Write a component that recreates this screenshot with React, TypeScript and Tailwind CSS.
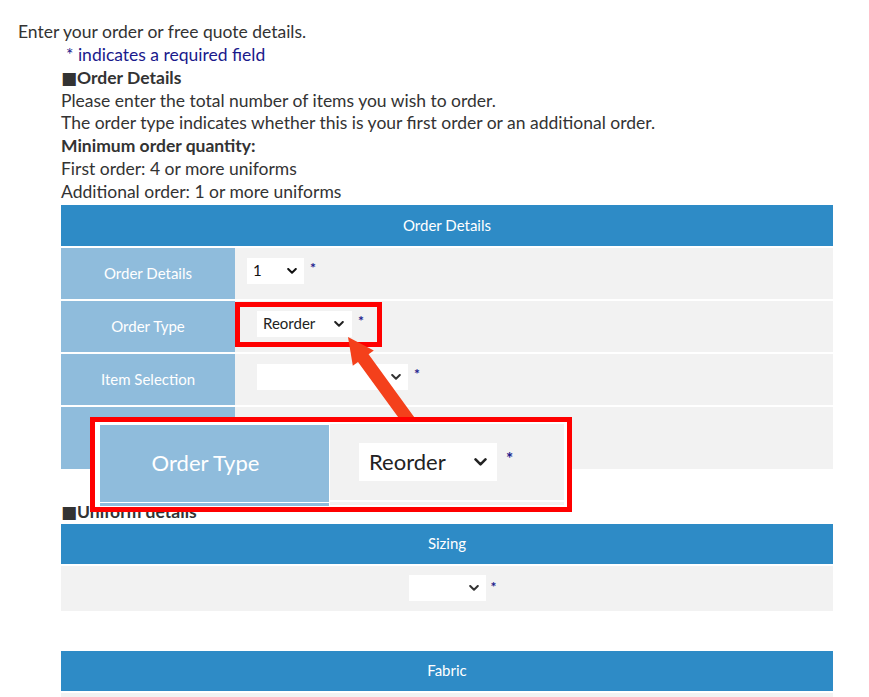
import React from 'react';

const Chevron = ({ className = '' }: { className?: string }) => (
  <svg viewBox="0 0 10 6" className={className} fill="none" stroke="currentColor" strokeWidth="2" strokeLinecap="round" strokeLinejoin="round">
    <path d="M1.2 1l3.8 3.8L8.8 1" />
  </svg>
);

const Req = ({ className = '' }: { className?: string }) => (
  <span className={`text-[#1a1a8c] text-[14px] font-bold leading-none ${className}`}>*</span>
);

const Square = () => (
  <span className="font-['DejaVu_Sans',sans-serif] text-[17px] font-normal leading-none">■</span>
);

const Row = ({ label, children, className = 'h-[53px]' }: { label: string; children?: React.ReactNode; className?: string }) => (
  <div className={`flex border-t-2 border-white ${className}`}>
    <div className="w-[174px] bg-[#8fbcdc] text-white text-[15px] flex items-center justify-center">{label}</div>
    <div className="flex-1 bg-[#f2f2f2] flex items-center pb-[5px]">{children}</div>
  </div>
);

const Header = ({ title, className = 'h-[41px]' }: { title: string; className?: string }) => (
  <div className={`bg-[#2e8bc6] text-white text-[15px] flex items-center justify-center ${className}`}>{title}</div>
);

export default function App() {
  return (
    <div className="relative w-[869px] h-[697px] overflow-hidden bg-white text-[#333] font-['Lato','Noto_Sans',sans-serif] text-[17.5px] leading-[22.86px]">
      <div className="pt-[21px] pl-[18px] pr-[36px]">
        <p>Enter your order or free quote details.</p>
        <div className="pl-[43px]">
          <p className="pl-[5px] text-[#1a1a8c]">* indicates a required field</p>
          <p className="font-bold h-[22.86px]"><Square />Order Details</p>
          <p>Please enter the total number of items you wish to order.</p>
          <p>The order type indicates whether this is your first order or an additional order.</p>
          <p className="font-bold">Minimum order quantity:</p>
          <p>First order: 4 or more uniforms</p>
          <p>Additional order: 1 or more uniforms</p>

          <div className="mt-[1px]">
            <Header title="Order Details" />
            <Row label="Order Details">
              <span className="ml-[12px] inline-flex items-center justify-between bg-white w-[57px] h-[26px] pl-[6px] pr-[7px] text-[15px] text-[#111]">
                1<Chevron className="w-[10px] h-[6px]" />
              </span>
              <Req className="ml-[6px] -mt-[6px]" />
            </Row>
            <Row label="Order Type">
              <span className="ml-[22px] inline-flex items-center justify-between bg-white w-[95px] h-[26px] pl-[6px] pr-[8px] text-[15px] text-[#222]">
                Reorder<Chevron className="w-[10px] h-[6px]" />
              </span>
              <Req className="ml-[6px] -mt-[6px]" />
            </Row>
            <Row label="Item Selection">
              <span className="ml-[22px] inline-flex items-center justify-end bg-white w-[151px] h-[26px] pr-[7px]">
                <Chevron className="w-[10px] h-[6px]" />
              </span>
              <Req className="ml-[6px] -mt-[6px]" />
            </Row>
            <Row label="" className="h-[64px]" />
          </div>

          <p className="mt-[32px] font-bold h-[23px]"><Square />Uniform details</p>
          <Header title="Sizing" className="h-[40px]" />
          <div className="border-t-2 border-white h-[52px] bg-[#f2f2f2] bg-clip-content flex items-center justify-center pb-[5px]">
            <span className="relative inline-flex items-center justify-end bg-white w-[77px] h-[26px] pr-[7px]">
              <Chevron className="w-[10px] h-[6px]" />
              <Req className="absolute left-[82px] top-[5px]" />
            </span>
          </div>
          <div className="h-[35px]" />
          <Header title="Fabric" className="h-[40px]" />
          <div className="border-t-2 border-white h-[52px] bg-[#f2f2f2] bg-clip-content" />
        </div>
      </div>

      {/* highlight on the order type select */}
      <div className="absolute left-[235px] top-[302px] w-[147px] h-[45px] border-[5px] border-[#ff0000]" />

      {/* arrow */}
      <svg className="absolute left-[330px] top-[330px] w-[100px] h-[100px]" viewBox="0 0 100 100">
        <polygon
          fill="#f4401b"
          points="18,7 43.8,20.5 38.6,24.3 84.3,87.2 73.7,94.8 28,31.9 22.8,35.7"
        />
      </svg>

      {/* zoomed callout */}
      <div className="absolute left-[90px] top-[417px] w-[482px] h-[95px] border-[5px] border-[#ff0000] bg-white">
        <div className="flex pl-[5px] pr-[3px] pt-[3px]">
          <div className="w-[229px]">
            <div className="h-[77px] bg-[#8fbcdc] text-white text-[22px] flex items-center justify-center pr-[18px]">Order Type</div>
            <div className="h-[1px] bg-white" />
            <div className="h-[3px] bg-[#8fbcdc]" />
          </div>
          <div className="flex-1 ml-[1px] -mt-[3px]">
            <div className="h-[78px] bg-[#f2f2f2] flex items-center pl-[29px] border-t-[2px] border-white">
              <span className="inline-flex items-center justify-between bg-white w-[138px] h-[38px] pl-[10px] pr-[10px] text-[22px] text-[#222]">
                Reorder<Chevron className="w-[13px] h-[8px]" />
              </span>
              <span className="ml-[9px] -mt-[8px] text-[#1a1a8c] text-[17px] font-bold leading-none">*</span>
            </div>
            <div className="h-[2px] bg-white" />
            <div className="h-[3px] bg-[#f2f2f2]" />
          </div>
        </div>
      </div>
    </div>
  );
}
